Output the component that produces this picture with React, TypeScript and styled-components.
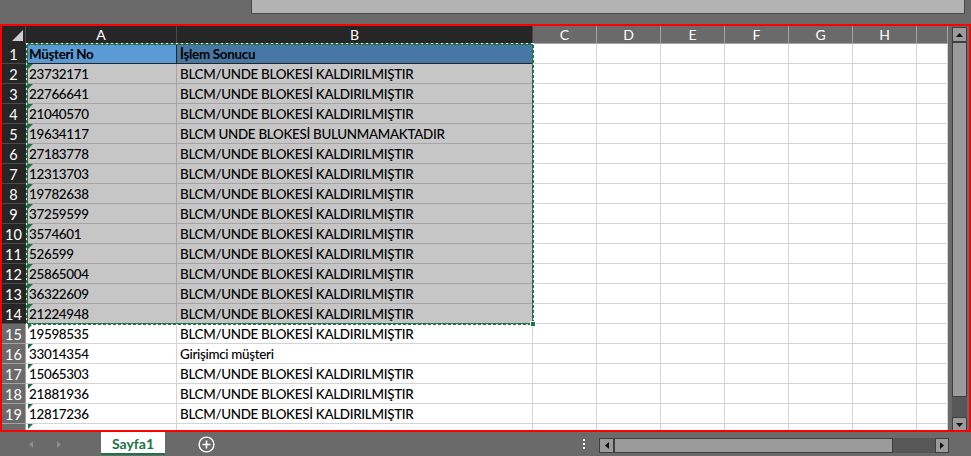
import React from "react";
import styled, { createGlobalStyle, css } from "styled-components";

const GlobalStyle = createGlobalStyle`
  html, body {
    margin: 0;
    padding: 0;
    background: #6a6a6a;
  }
  body {
    font-family: Lato, "Noto Sans", sans-serif;
  }
`;

type Tone = "key" | "head" | "sel" | "plain";

const DONE = "BLCM/UNDE BLOKESİ KALDIRILMIŞTIR";

const rows: [string, string][] = [
  ["Müşteri No", "İşlem Sonucu"],
  ["23732171", DONE],
  ["22766641", DONE],
  ["21040570", DONE],
  ["19634117", "BLCM UNDE BLOKESİ BULUNMAMAKTADIR"],
  ["27183778", DONE],
  ["12313703", DONE],
  ["19782638", DONE],
  ["37259599", DONE],
  ["3574601", DONE],
  ["526599", DONE],
  ["25865004", DONE],
  ["36322609", DONE],
  ["21224948", DONE],
  ["19598535", DONE],
  ["33014354", "Girişimci müşteri"],
  ["15065303", DONE],
  ["21881936", DONE],
  ["12817236", DONE],
  ["", ""],
];

const columns = ["A", "B", "C", "D", "E", "F", "G", "H", ""];
const SELECTED_ROWS = 14;

const Page = styled.div`
  width: 971px;
  height: 456px;
  display: flex;
  flex-direction: column;
  overflow: hidden;
  background: #6a6a6a;
`;

const TopBar = styled.div`
  height: 24px;
  flex-shrink: 0;
`;

const FormulaBox = styled.div`
  box-sizing: border-box;
  margin-left: 251px;
  width: 714px;
  height: 14px;
  background: #b3b3b3;
  border: 1px solid #474747;
  border-top: none;
`;

const Sheet = styled.div`
  box-sizing: border-box;
  height: 408px;
  flex-shrink: 0;
  border: 2px solid #ff0000;
  display: flex;
`;

const Grid = styled.div`
  position: relative;
  flex: 1;
  overflow: hidden;
  display: grid;
  grid-template-columns: 24px 151px 356px repeat(6, 64px) 31px;
  grid-template-rows: 18px;
  grid-auto-rows: 20px;
  background: #fff;
`;

const Corner = styled.div`
  box-sizing: border-box;
  position: relative;
  background: #262626;
  border-right: 1px solid #4a4a4a;
  border-bottom: 1px solid #262626;

  &::after {
    content: "";
    position: absolute;
    right: 2px;
    bottom: 2px;
    border-left: 11px solid transparent;
    border-bottom: 11px solid #cfcfcf;
  }
`;

const ColHead = styled.div<{ $active?: boolean }>`
  box-sizing: border-box;
  display: flex;
  align-items: center;
  justify-content: center;
  font-size: 14px;
  color: #fff;
  background: ${(p) => (p.$active ? "#262626" : "#6a6a6a")};
  border-right: 1px solid ${(p) => (p.$active ? "#4a4a4a" : "#a3a3a3")};
  border-bottom: 1px solid ${(p) => (p.$active ? "#262626" : "#a3a3a3")};
`;

const RowHead = styled.div<{ $active?: boolean }>`
  box-sizing: border-box;
  display: flex;
  align-items: center;
  justify-content: center;
  padding-top: 1px;
  font-size: 14.5px;
  color: #fff;
  background: ${(p) => (p.$active ? "#262626" : "#6a6a6a")};
  border-right: 1px solid ${(p) => (p.$active ? "#262626" : "#a3a3a3")};
  border-bottom: 1px solid ${(p) => (p.$active ? "#4a4a4a" : "#a3a3a3")};
`;

const tones: Record<Tone, { bg: string; line: string }> = {
  key: { bg: "#5b9bd5", line: "#262626" },
  head: { bg: "#4778a5", line: "#262626" },
  sel: { bg: "#c6c6c6", line: "#a5a5a5" },
  plain: { bg: "#ffffff", line: "#d4d4d4" },
};

const Cell = styled.div<{ $tone: Tone; $flag?: boolean; $bold?: boolean }>`
  box-sizing: border-box;
  position: relative;
  display: flex;
  align-items: flex-end;
  padding: 0 0 1px 3px;
  white-space: nowrap;
  overflow: hidden;
  font-size: 13.4px;
  letter-spacing: -0.3px;
  color: #000;
  font-weight: ${(p) => (p.$bold ? 700 : 500)};
  background: ${(p) => tones[p.$tone].bg};
  border-right: 1px solid ${(p) => tones[p.$tone].line};
  border-bottom: 1px solid ${(p) => tones[p.$tone].line};

  ${(p) =>
    p.$flag &&
    css`
      &::before {
        content: "";
        position: absolute;
        top: 0;
        left: 2px;
        border-top: 5px solid #1e7145;
        border-right: 5px solid transparent;
      }
    `}
`;

/* marching ants round the copied range: green line with short white dashes */
const Marquee = styled.div`
  position: absolute;
  left: 24px;
  top: 17px;
  width: 508px;
  height: 282px;
  box-sizing: border-box;
  border: 2px solid #217346;
  pointer-events: none;

  &::after {
    content: "";
    position: absolute;
    inset: -2px;
    background:
      repeating-linear-gradient(90deg, #fff 0 2px, transparent 2px 5px) top / 100% 1px no-repeat,
      repeating-linear-gradient(90deg, #fff 0 2px, transparent 2px 5px) bottom / 100% 1px no-repeat,
      repeating-linear-gradient(180deg, #fff 0 2px, transparent 2px 5px) left / 1px 100% no-repeat,
      repeating-linear-gradient(180deg, #fff 0 2px, transparent 2px 5px) right / 1px 100% no-repeat;
  }
`;

const FillHandle = styled.div`
  position: absolute;
  right: -4px;
  bottom: -4px;
  width: 6px;
  height: 6px;
  box-sizing: border-box;
  background: #217346;
  border: 1px solid #fff;
  z-index: 1;
`;

const VScroll = styled.div`
  width: 21px;
  flex-shrink: 0;
  background: #6a6a6a;
  padding: 1px 2px 0 4px;
  box-sizing: border-box;
  overflow: hidden;
  display: flex;
  flex-direction: column;
`;

const ArrowButton = styled.div<{ $w?: number; $h?: number }>`
  box-sizing: border-box;
  flex-shrink: 0;
  width: ${(p) => p.$w ?? 15}px;
  height: ${(p) => p.$h ?? 15}px;
  background: #9b9b9b;
  border: 1px solid #3e3e3e;
  display: flex;
  align-items: center;
  justify-content: center;
`;

const VTrack = styled.div`
  flex-shrink: 0;
  height: 375px;
  background: #575757;
`;

const VThumb = styled.div`
  box-sizing: border-box;
  height: 355px;
  background: #9b9b9b;
  border: 1px solid #3e3e3e;
`;

const BottomBar = styled.div`
  height: 24px;
  flex-shrink: 0;
  display: flex;
  align-items: flex-start;
`;

const TabNav = styled.div`
  width: 101px;
  height: 24px;
  box-sizing: border-box;
  padding-left: 28px;
  display: flex;
  align-items: center;
  gap: 22px;
`;

const SheetTab = styled.div`
  box-sizing: border-box;
  width: 64px;
  height: 23px;
  background: #fff;
  border-bottom: 2px solid #217346;
  color: #217346;
  font-weight: 700;
  font-size: 14px;
  display: flex;
  align-items: center;
  justify-content: center;
  padding-top: 1px;
`;

const AddSheet = styled.div`
  margin-left: 33px;
  height: 24px;
  display: flex;
  align-items: center;
`;

const Spacer = styled.div`
  flex: 1;
`;

const Dots = styled.div`
  height: 24px;
  display: flex;
  flex-direction: column;
  justify-content: center;
  gap: 2px;
  margin-right: 14px;
`;

const Dot = styled.span`
  width: 2px;
  height: 2px;
  background: #fff;
`;

const HScroll = styled.div`
  margin-top: 6px;
  margin-right: 22px;
  width: 350px;
  height: 15px;
  display: flex;
`;

const HThumb = styled.div`
  box-sizing: border-box;
  width: 279px;
  height: 15px;
  background: #9b9b9b;
  border: 1px solid #3e3e3e;
`;

const HTrack = styled.div`
  width: 42px;
  height: 15px;
  background: #575757;
`;

const Tri = ({ dir, color = "#111", size = 7 }: { dir: "up" | "down" | "left" | "right"; color?: string; size?: number }) => {
  const pts = {
    up: "0,5 7,5 3.5,1",
    down: "0,1 7,1 3.5,5",
    left: "5,0 5,7 1,3.5",
    right: "1,0 1,7 5,3.5",
  }[dir];
  const vertical = dir === "up" || dir === "down";
  return (
    <svg width={vertical ? size : 6} height={vertical ? 6 : size} viewBox={vertical ? "0 0 7 6" : "0 0 6 7"}>
      <polygon points={pts} fill={color} />
    </svg>
  );
};

export default function App() {
  return (
    <>
      <GlobalStyle />
      <Page>
        <TopBar>
          <FormulaBox />
        </TopBar>
        <Sheet>
          <Grid>
            <Corner />
            {columns.map((c, i) => (
              <ColHead key={i} $active={i < 2}>
                {c}
              </ColHead>
            ))}
            {rows.map(([a, b], r) => {
              const n = r + 1;
              const inSel = n <= SELECTED_ROWS;
              const header = n === 1;
              return (
                <React.Fragment key={n}>
                  <RowHead $active={inSel}>{n < 20 ? n : ""}</RowHead>
                  <Cell $tone={header ? "key" : inSel ? "sel" : "plain"} $bold={header} $flag={!header}>
                    {a}
                  </Cell>
                  <Cell $tone={header ? "head" : inSel ? "sel" : "plain"} $bold={header}>
                    {b}
                  </Cell>
                  {columns.slice(2).map((_, i) => (
                    <Cell key={i} $tone="plain" />
                  ))}
                </React.Fragment>
              );
            })}
            <Marquee>
              <FillHandle />
            </Marquee>
          </Grid>
          <VScroll>
            <ArrowButton>
              <Tri dir="up" />
            </ArrowButton>
            <VTrack>
              <VThumb />
            </VTrack>
            <ArrowButton>
              <Tri dir="down" />
            </ArrowButton>
          </VScroll>
        </Sheet>
        <BottomBar>
          <TabNav>
            <Tri dir="left" color="#8d8d8d" />
            <Tri dir="right" color="#8d8d8d" />
          </TabNav>
          <SheetTab>Sayfa1</SheetTab>
          <AddSheet>
            <svg width="17" height="17" viewBox="0 0 17 17">
              <circle cx="8.5" cy="8.5" r="7.4" fill="none" stroke="#fff" strokeWidth="1.4" />
              <path d="M8.5 4.5v8M4.5 8.5h8" stroke="#fff" strokeWidth="1.6" />
            </svg>
          </AddSheet>
          <Spacer />
          <Dots>
            <Dot />
            <Dot />
            <Dot />
          </Dots>
          <HScroll>
            <ArrowButton>
              <Tri dir="left" />
            </ArrowButton>
            <HThumb />
            <HTrack />
            <ArrowButton $w={14}>
              <Tri dir="right" />
            </ArrowButton>
          </HScroll>
        </BottomBar>
      </Page>
    </>
  );
}
